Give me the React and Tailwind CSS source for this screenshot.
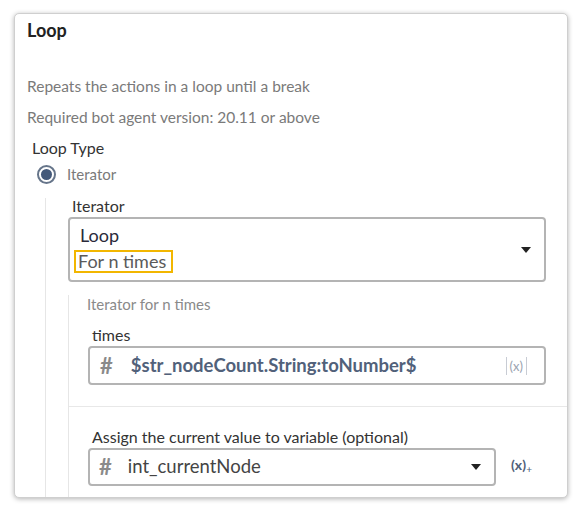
export default function App() {
    return (
        <div className="w-[582px] h-[512px] bg-white pt-[13px] pl-[14px] font-['Lato',sans-serif]">
            <div className="w-[554px] h-[485px] bg-white rounded-[5px] border border-[#cfcfcf] shadow-[0_1px_5px_rgba(0,0,0,0.3)] overflow-hidden flex flex-col">
                <div className="pl-[12px] pt-[5px] text-[18px] leading-[22px] font-bold text-[#222]">Loop</div>
                <div className="pl-[12px] mt-[35px] text-[15.5px] leading-[20px] text-[#7a7a7a]">Repeats the actions in a loop until a break</div>
                <div className="pl-[12px] mt-[11px] text-[15.5px] leading-[20px] text-[#7a7a7a]">Required bot agent version: 20.11 or above</div>
                <div className="pl-[17px] mt-[10px] text-[16px] leading-[22px] text-[#333]">Loop Type</div>
                <div className="pl-[22px] mt-[5px] flex items-center h-[20px]">
                    <span className="w-[19px] h-[19px] rounded-full border-2 border-[#66758a] flex items-center justify-center">
                        <span className="w-[11px] h-[11px] rounded-full bg-[#44597a]" />
                    </span>
                    <span className="ml-[11px] text-[15px] text-[#7a7a7a]">Iterator</span>
                </div>
                <div className="ml-[30px] mt-[14px] flex-1 border-l border-[#e6e6e6] pl-[22px] flex flex-col">
                    <div className="ml-[4px] text-[16px] leading-[16px] text-[#333]">Iterator</div>
                    <div className="mt-[3px] mr-[21px] h-[65px] rounded-[4px] border-2 border-[#b4b4b4] flex pl-[4px] pr-[13px]">
                        <div className="flex-1 flex flex-col pt-[5px]">
                            <div className="ml-[6px] text-[18px] leading-[22px] text-[#2a2a3a]">Loop</div>
                            <div className="mt-[4px] w-[99px] h-[23px] border-2 border-[#f2b600] flex items-center pl-[2px] text-[18px] text-[#5a5a5a]">For n times</div>
                        </div>
                        <div className="flex items-center">
                            <svg width="10" height="6" viewBox="0 0 10 6"><path d="M0 0h10L5 6z" fill="#222" /></svg>
                        </div>
                    </div>
                    <div className="mt-[13px] flex-1 border-l border-[#e6e6e6] flex flex-col">
                        <div className="pl-[18px] text-[15px] leading-[18px] text-[#8a8a8a]">Iterator for n times</div>
                        <div className="pl-[23px] mt-[12px] text-[16px] leading-[20px] text-[#333]">times</div>
                        <div className="ml-[19px] mr-[21px] mt-[1px] h-[39px] rounded-[4px] border-2 border-[#b4b4b4] flex items-center pl-[10px] pr-[17px]">
                            <span className="text-[22px] font-bold text-[#8a8a8a] leading-none">#</span>
                            <span className="ml-[18px] flex-1 text-[18.5px] font-bold text-[#51617a]">$str_nodeCount.String:toNumber$</span>
                            <span className="text-[13px] text-[#9aa3b0] border-x border-[#c8ccd4] px-[3px] leading-[18px]">(x)</span>
                        </div>
                        <div className="mt-[21px] border-t border-[#e8e8e8]" />
                        <div className="pl-[23px] mt-[20px] text-[16px] leading-[20px] text-[#333]">Assign the current value to variable (optional)</div>
                        <div className="flex items-center mt-[1px]">
                            <div className="ml-[19px] w-[408px] h-[38px] rounded-[4px] border-2 border-[#b4b4b4] flex items-center pl-[9px] pr-[13px]">
                                <span className="text-[22px] font-bold text-[#8a8a8a] leading-none">#</span>
                                <span className="ml-[16px] flex-1 text-[18.5px] text-[#444]">int_currentNode</span>
                                <svg width="10" height="6" viewBox="0 0 10 6"><path d="M0 0h10L5 6z" fill="#222" /></svg>
                            </div>
                            <span className="ml-[15px] relative text-[14px] font-bold text-[#51617a] -mt-[6px]">
                                (x)
                                <span className="absolute -right-[6px] top-[8px] text-[10px] font-normal">+</span>
                            </span>
                        </div>
                    </div>
                </div>
            </div>
        </div>
    );
}
